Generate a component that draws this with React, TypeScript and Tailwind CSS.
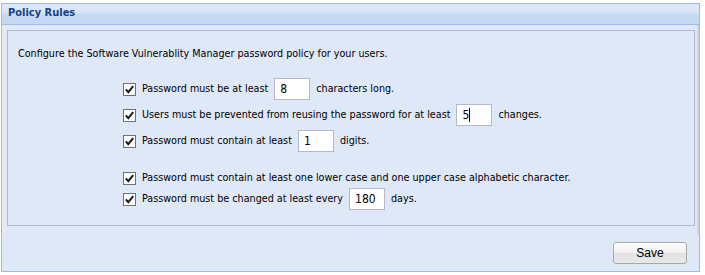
import React from "react";

const font = { fontFamily: '"DejaVu Sans Condensed", "DejaVu Sans", sans-serif' };

function Check() {
  return (
    <span className="inline-flex w-[13px] h-[13px] border border-[#707070] bg-white items-center justify-center shrink-0">
      <svg width="11" height="11" viewBox="0 0 11 11">
        <path d="M1.8 5.3 L4.3 8.2 L9.2 2.2" fill="none" stroke="#1a1a1a" strokeWidth="2" />
      </svg>
    </span>
  );
}

function Field({ value, caret }: { value: string; caret?: boolean }) {
  return (
    <span className="inline-flex w-[36px] h-[22px] border border-[#b5b8c8] bg-white items-center pl-[5px] text-[12px] text-black mx-[6px]">
      {value}
      {caret && <span className="inline-block w-px h-[14px] bg-black" />}
    </span>
  );
}

function Row({ children, h = "h-[26px]" }: { children: React.ReactNode; h?: string }) {
  return (
    <div className={`flex items-center ${h}`}>
      <Check />
      <span className="ml-[6px] flex items-center">{children}</span>
    </div>
  );
}

export default function App() {
  return (
    <div className="w-[705px] h-[275px] bg-white pt-[3px] pl-[1px] text-[10.7px] text-black" style={font}>
      <div className="w-[699px] h-[269px] border border-[#99bbe8] flex flex-col bg-[#dfe8f6]">
        <div className="h-[21px] border-b border-[#99bbe8] bg-[linear-gradient(#dfeaf8_0%,#d6e4f6_45%,#c6d9f2_50%,#c6d9f2_100%)] flex items-center pl-[6px] pb-[1px]">
          <span className="font-bold text-[#15428b] text-[11px]">Policy Rules</span>
        </div>
        <div className="flex-1 flex flex-col">
          <div className="h-[210px] border-l-[4px] border-l-[#e6e9ef] border-r-[2px] border-r-[#d2d4d8] pt-[5px] pr-[2px] pl-px">
            <div className="h-[196px] border border-[#b5b8c8] pl-[10px]">
              <div className="mt-[15px] h-[16px] flex items-center">
                Configure the Software Vulnerablity Manager password policy for your users.
              </div>
              <div className="ml-[105px] mt-[14px]">
                <Row>
                  Password must be at least <Field value="8" /> characters long.
                </Row>
                <Row>
                  Users must be prevented from reusing the password for at least <Field value="5" caret /> changes.
                </Row>
                <Row>
                  Password must contain at least <Field value="1" /> digits.
                </Row>
                <div className="h-[16px]" />
                <Row h="h-[16px]">
                  Password must contain at least one lower case and one upper case alphabetic character.
                </Row>
                <Row>
                  Password must be changed at least every <Field value="180" /> days.
                </Row>
              </div>
            </div>
          </div>
          <div className="flex justify-end pr-[12px] pt-[7px]">
            <button
              className="w-[74px] h-[22px] rounded-[3px] border border-[#a8a8a8] bg-[linear-gradient(#fbfbfb_0%,#f2f2f2_50%,#e2e2e2_51%,#e8e8e8_100%)] text-[12px] text-black flex items-center justify-center"
              style={{ fontFamily: '"Liberation Sans", Arial, sans-serif' }}
            >
              Save
            </button>
          </div>
        </div>
      </div>
    </div>
  );
}
